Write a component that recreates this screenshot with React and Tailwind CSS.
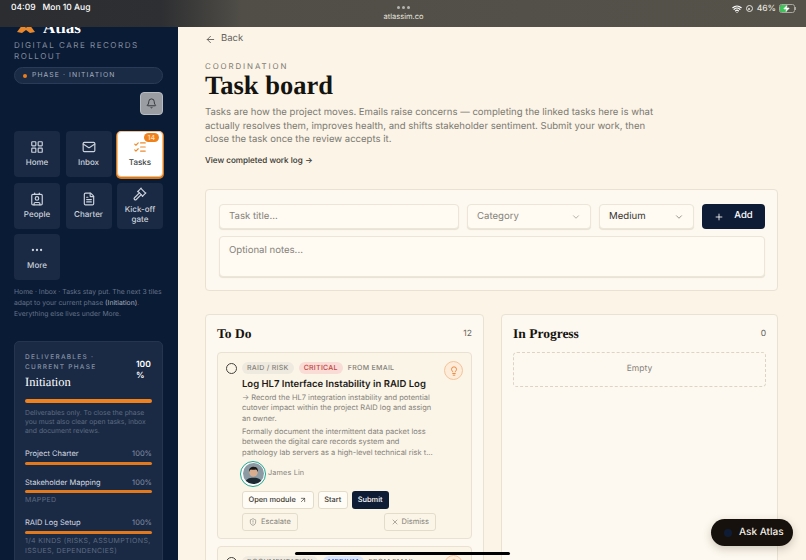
import React from 'react';
import {
  ArrowLeft, ArrowUpRight, Bell, ChevronDown, Contact, Ellipsis, FileText, Gavel, Lightbulb,
  LayoutGrid, ListChecks, Mail, Plus, ShieldAlert, Wifi, X, Zap,
} from 'lucide-react';

const tiles = [
  { label: 'Home', icon: LayoutGrid },
  { label: 'Inbox', icon: Mail },
  { label: 'Tasks', icon: ListChecks, active: true, badge: 14 },
  { label: 'People', icon: Contact },
  { label: 'Charter', icon: FileText },
  { label: 'Kick-off gate', icon: Gavel },
  { label: 'More', icon: Ellipsis },
];

const deliverables = [
  { name: 'Project Charter', pct: '100%' },
  { name: 'Stakeholder Mapping', pct: '100%', note: 'MAPPED' },
  { name: 'RAID Log Setup', pct: '100%', note: '1/4 KINDS (RISKS, ASSUMPTIONS, ISSUES, DEPENDENCIES)' },
];

const serif = "font-['Liberation_Serif',serif]";

const StatusBar = () => (
  <div className="relative z-10 flex h-[27px] shrink-0 bg-[linear-gradient(90deg,#2b2d31_0%,#2e2f32_20%,#504e47_30%,#55524a_100%)] text-white">
    <div className="flex flex-1 items-start gap-[7px] pl-[11px] pt-[2px] text-[8.5px] font-medium">
      <span>04:09</span>
      <span>Mon 10 Aug</span>
    </div>
    <div className="flex flex-col items-center pt-[6px]">
      <div className="flex gap-[2px]">
        <span className="h-[3px] w-[3px] rounded-full bg-[#b5b3ad]" />
        <span className="h-[3px] w-[3px] rounded-full bg-[#b5b3ad]" />
        <span className="h-[3px] w-[3px] rounded-full bg-[#b5b3ad]" />
      </div>
      <span className="mt-[3px] text-[7.5px] leading-[10px] text-[#e6e4de]">atlassim.co</span>
    </div>
    <div className="flex flex-1 items-start justify-end pr-[10px] pt-[3px] text-[8.5px] font-medium">
      <Wifi className="mr-[4px] mt-[1px] h-[10px] w-[10px]" strokeWidth={3} />
      <span className="mr-[4px] mt-[2px] flex h-[7px] w-[7px] items-center justify-center rounded-full border border-[#e6e4de]">
        <span className="h-[2px] w-[2px] rounded-full bg-[#e6e4de]" />
      </span>
      <span className="mr-[3px] text-[#e6e4de]">46%</span>
      <div className="relative mt-[1px] flex h-[9px] w-[16px] overflow-hidden rounded-[2.5px] border border-[#a9a79f]">
        <div className="h-full w-[7px] bg-[#3fc25a]" />
        <Zap className="absolute left-[3px] top-0 h-[7px] w-[7px] fill-white text-white" />
      </div>
      <span className="mt-[4px] h-[3px] w-[1px] bg-[#a9a79f]" />
    </div>
  </div>
);

const Sidebar = () => (
  <aside className="w-[178px] shrink-0 bg-[#0a1b35] pl-[14px] pr-[15px]">
    <div className="-mt-[9px] flex h-[20px] items-center gap-[8px]">
      <svg width="18" height="12" viewBox="0 0 18 12" className="ml-[3px]">
        <path d="M0 10 L6 2 L9 6 L12 2 L18 10 L13 11 L9 8 L5 11 Z" fill="#e8872b" />
      </svg>
      <span className={`${serif} text-[17px] font-bold text-white`}>Atlas</span>
    </div>
    <p className="mt-[2px] text-[8px] uppercase leading-[11px] tracking-[0.19em] text-[#858d9e]">
      Digital care records rollout
    </p>
    <div className="mt-[5px] flex h-[17px] items-center gap-[5px] rounded-full border border-[#2a3b57] bg-[#1a2b46] px-[8px] text-[6.8px] uppercase tracking-[0.16em] text-[#a4aebd]">
      <span className="h-[4px] w-[4px] rounded-full bg-[#ef7d1a]" />
      Phase · Initiation
    </div>
    <div className="mt-[8px] flex justify-end">
      <div className="flex h-[23px] w-[23px] items-center justify-center rounded-[4px] border border-[#b8bbc0] bg-[#9a9da2]">
        <Bell className="h-[11px] w-[11px] text-[#2c3035]" />
      </div>
    </div>
    <div className="mt-[16px] grid grid-cols-3 gap-[5.5px]">
      {tiles.map(({ label, icon: Icon, active, badge }) => (
        <div
          key={label}
          className={`relative flex h-[46px] flex-col items-center justify-center rounded-[4px] text-center text-[8px] font-medium leading-[9.5px] ${
            active ? 'border border-[#f0c08c] bg-white text-[#3a3f47] shadow-[0_1px_0_1px_#d9791d]' : 'bg-[#1a2a44] text-[#ccd2db]'
          }`}
        >
          {badge && (
            <span className="absolute right-[3px] top-[1px] rounded-full bg-[#f0821e] px-[4px] text-[7px] leading-[9px] text-[#ffe3c4]">
              {badge}
            </span>
          )}
          <Icon className={`mb-[4px] h-[14px] w-[14px] ${active ? 'text-[#ee8a2a]' : ''}`} />
          <span className="w-[38px]">{label}</span>
        </div>
      ))}
    </div>
    <p className="mt-[5.5px] text-[6.8px] leading-[11px] text-[#66738a]">
      Home · Inbox · Tasks stay put. The next 3 tiles adapt to your current phase <span className="text-[#a7afbc]">(Initiation)</span>. Everything else lives under More.
    </p>
    <div className="mt-[22px] rounded-[5px] border border-[#25354f] bg-[#1a2a44] px-[10px] py-[10px]">
      <div className="flex items-start justify-between">
        <div>
          <p className="text-[6.5px] font-medium uppercase leading-[10px] tracking-[0.2em] text-[#8591a5]">
            Deliverables · Current phase
          </p>
          <p className={`${serif} mt-[2px] text-[12.5px] leading-[16px] text-white`}>Initiation</p>
        </div>
        <span className="mt-[8px] w-[16px] shrink-0 text-[8.5px] font-semibold leading-[11px] text-white">100 %</span>
      </div>
      <div className="mt-[9px] h-[4px] rounded-full bg-[#f0821e]" />
      <p className="mt-[5.5px] text-[6.8px] leading-[9px] text-[#5f6c83]">
        Deliverables only. To close the phase you must also clear open tasks, inbox and document reviews.
      </p>
      <div className="mt-[13px] flex flex-col gap-[12px]">
        {deliverables.map((d) => (
          <div key={d.name}>
            <div className="flex justify-between text-[7.5px] leading-[11px]">
              <span className="text-[#d7dbe2]">{d.name}</span>
              <span className="text-[#8591a5]">{d.pct}</span>
            </div>
            <div className="mt-[2.5px] h-[3px] rounded-full bg-[#e2791c]" />
            {d.note && <p className="mt-[2px] text-[7px] leading-[10px] tracking-[0.05em] text-[#5f6c83]">{d.note}</p>}
          </div>
        ))}
      </div>
    </div>
  </aside>
);

const Avatar = () => (
  <div className="h-[26px] w-[26px] shrink-0 rounded-full border-[1.5px] border-[#1fa790] bg-white p-[1.5px]">
    <svg viewBox="0 0 20 20" className="h-full w-full rounded-full">
      <rect width="20" height="20" fill="#8b9aa3" />
      <path d="M2 20c0-5 4-6 8-6s8 1 8 6z" fill="#1e2a33" />
      <circle cx="10" cy="9" r="4" fill="#d8ad8f" />
      <path d="M5.8 8.5C5.5 4.5 8 3.6 10 3.6s4.6 1 4.2 4.9c-.6-1.6-1.2-2.2-2-2.4-1.6.4-3.6.4-4.6 0-.8.4-1.4 1-1.8 2.4z" fill="#1a1613" />
    </svg>
  </div>
);

const Tag = ({ className, children }) => (
  <span className={`rounded-full px-[5px] text-[7px] font-medium uppercase leading-[12px] tracking-[0.04em] ${className}`}>
    {children}
  </span>
);

const BulbBadge = () => (
  <div className="flex h-[19px] w-[19px] shrink-0 items-center justify-center rounded-full border border-[#f5c39a] bg-[#fcecd9]">
    <Lightbulb className="h-[10px] w-[10px] text-[#e8772a]" />
  </div>
);

const TaskCard = () => (
  <div className="rounded-[4px] border border-[#e9e2d2] bg-[#fbf5e8] pb-[7px] pl-[8px] pr-[8px] pt-[8px]">
    <div className="flex gap-[5px]">
      <span className="mt-[2px] h-[11px] w-[11px] shrink-0 rounded-full border border-[#44423d]" />
      <div className="min-w-0 flex-1">
        <div className="flex items-start">
          <div className="mt-[1px] flex flex-1 items-center gap-[5px]">
            <Tag className="bg-[#efeadf] text-[#85827a]">RAID / Risk</Tag>
            <Tag className="bg-[#f9dcd6] text-[#c1453f]">Critical</Tag>
            <span className="text-[7px] font-medium uppercase tracking-[0.04em] text-[#85827a]">From email</span>
          </div>
          <BulbBadge />
        </div>
        <h3 className="-mt-[2px] text-[9.5px] font-semibold leading-[14px] text-[#1c1a17]">
          Log HL7 Interface Instability in RAID Log
        </h3>
        <p className="mt-[1px] w-[194px] text-[7.5px] leading-[10.3px] text-[#85827a]">
          → Record the HL7 integration instability and potential cutover impact within the project RAID log and assign an owner.
        </p>
        <p className="mt-[3px] w-[194px] text-[7.5px] leading-[10.3px] text-[#85827a]">
          Formally document the intermittent data packet loss between the digital care records system and pathology lab servers as a high-level technical risk t...
        </p>
        <div className="-ml-[2px] mt-[3px] flex items-center gap-[2px]">
          <Avatar />
          <span className="text-[7.3px] tracking-[0.02em] text-[#85827a]">James Lin</span>
        </div>
        <div className="mt-[4px] flex gap-[4px] text-[7.4px] font-medium">
          <span className="flex h-[18px] items-center gap-[3.5px] rounded-[3px] border border-[#e3dccb] bg-[#fffcf5] px-[5.5px] text-[#3a3833]">
            Open module <ArrowUpRight className="h-[8px] w-[8px]" />
          </span>
          <span className="flex h-[18px] items-center rounded-[3px] border border-[#e3dccb] bg-[#fffcf5] px-[5.5px] text-[#3a3833]">Start</span>
          <span className="flex h-[18px] items-center rounded-[3px] bg-[#0f1c35] px-[6px] text-white">Submit</span>
        </div>
        <div className="mt-[4px] flex w-[194px] justify-between text-[7.5px] text-[#85827a]">
          <span className="flex h-[18px] items-center gap-[4px] rounded-[3px] border border-[#e3dccb] px-[6px]">
            <ShieldAlert className="h-[8px] w-[8px]" /> Escalate
          </span>
          <span className="flex h-[18px] items-center gap-[3px] rounded-[3px] border border-[#e3dccb] px-[6px]">
            <X className="h-[8px] w-[8px]" /> Dismiss
          </span>
        </div>
      </div>
    </div>
  </div>
);

const NextCard = () => (
  <div className="rounded-t-[4px] border border-[#e9e2d2] bg-[#fbf5e8] pb-[6px] pl-[8px] pr-[8px] pt-[8px]">
    <div className="flex gap-[5px]">
      <span className="mt-[2px] h-[11px] w-[11px] shrink-0 rounded-full border border-[#44423d]" />
      <div className="flex flex-1 items-start justify-between">
        <div className="mt-[1px] flex items-center gap-[5px]">
          <Tag className="bg-[#efeadf] text-[#85827a]">Documentation</Tag>
          <Tag className="bg-[#dce6f9] text-[#3d65c1]">Medium</Tag>
          <span className="text-[7px] font-medium uppercase tracking-[0.04em] text-[#85827a]">From email</span>
        </div>
        <BulbBadge />
      </div>
    </div>
  </div>
);

const Field = ({ className, muted, children }) => (
  <div className={`flex h-[25px] items-center justify-between rounded-[4px] border border-[#ece6d8] bg-[#fffbf3] px-[9px] pt-[1px] text-[9.6px] shadow-[0_1px_1px_#e6e0d2] ${muted ? 'text-[#85827a]' : 'text-[#35332e]'} ${className}`}>
    {children}
  </div>
);

export default function App() {
  return (
    <div className="relative flex h-[560px] w-[806px] flex-col overflow-hidden bg-[#fbf4e7] font-['Inter',sans-serif] [text-rendering:geometricPrecision]">
      <StatusBar />
      <div className="flex min-h-0 flex-1">
        <Sidebar />
        <main className="min-w-0 flex-1 pl-[27px] pr-[28px]">
          <div className="flex items-center gap-[5px] pt-[5px] text-[9.5px] text-[#66645d]">
            <ArrowLeft className="h-[11px] w-[11px]" /> Back
          </div>
          <p className="mt-[15px] text-[7.9px] uppercase leading-[10px] tracking-[0.24em] text-[#7c7a72]">Coordination</p>
          <h1 className={`${serif} -mt-[1px] text-[26.5px] font-bold leading-[30px] text-[#15130f]`}>Task board</h1>
          <p className="mt-[6px] w-[460px] text-[9.55px] leading-[13.6px] text-[#7c7a72]">
            Tasks are how the project moves. Emails raise concerns — completing the linked tasks here is what actually resolves them, improves health, and shifts stakeholder sentiment. Submit your work, then close the task once the review accepts it.
          </p>
          <p className="mt-[7px] text-[8.1px] font-medium leading-[12px] text-[#35332e]">View completed work log →</p>

          <section className="mt-[23px] rounded-[4px] border border-[#e9e2d2] bg-[#fef9f0] pb-[13px] pl-[13px] pr-[12px] pt-[14px]">
            <div className="flex gap-[8px]">
              <Field className="flex-1" muted>Task title...</Field>
              <Field className="w-[124px]" muted>Category <ChevronDown className="h-[10px] w-[10px] text-[#a5a298]" /></Field>
              <Field className="w-[95px]">Medium <ChevronDown className="h-[10px] w-[10px] text-[#85827a]" /></Field>
              <div className="flex h-[25px] w-[63px] items-center justify-center gap-[10px] rounded-[4px] bg-[#0f1c35] text-[9.5px] font-medium text-white">
                <Plus className="h-[10px] w-[10px]" /> Add
              </div>
            </div>
            <div className="mt-[7px] h-[41px] rounded-[4px] border border-[#ece6d8] bg-[#fffbf3] px-[9px] py-[8px] text-[9.6px] leading-[12px] text-[#85827a] shadow-[0_1px_1px_#e6e0d2]">
              Optional notes...
            </div>
          </section>

          <div className="mt-[23px] grid grid-cols-[279px_1fr] gap-[17px]">
            <section className="h-[300px] rounded-[4px] border border-[#e9e2d2] bg-[#fef9f0] px-[11px] pt-[11px]">
              <div className="flex items-center justify-between">
                <h2 className={`${serif} text-[13.5px] font-bold leading-[16px] text-[#15130f]`}>To Do</h2>
                <span className="text-[8.5px] text-[#66645d]">12</span>
              </div>
              <div className="mt-[10px] flex flex-col gap-[7px]">
                <TaskCard />
                <NextCard />
              </div>
            </section>
            <section className="h-[300px] rounded-[4px] border border-[#e9e2d2] bg-[#fef9f0] px-[11px] pt-[11px]">
              <div className="flex items-center justify-between">
                <h2 className={`${serif} text-[13.5px] font-bold leading-[16px] text-[#15130f]`}>In Progress</h2>
                <span className="text-[8.5px] text-[#66645d]">0</span>
              </div>
              <div className="mt-[10px] flex h-[35px] items-center justify-center rounded-[4px] border border-dashed border-[#dcd5c4] text-[8.5px] text-[#85827a]">
                Empty
              </div>
            </section>
          </div>
        </main>
      </div>

      <div className="absolute bottom-[14px] right-[13px] flex h-[27px] w-[82px] items-center gap-[7px] rounded-full bg-[#17110d] pl-[13px] text-[10px] font-medium text-[#f3efe7] shadow-[0_3px_8px_rgba(60,50,30,0.25)]">
        <span className="h-[8px] w-[8px] rounded-full bg-[#0f1c35]" />
        Ask Atlas
      </div>
      <div className="absolute bottom-[5px] left-[295px] h-[3px] w-[215px] rounded-full bg-black" />
    </div>
  );
}
